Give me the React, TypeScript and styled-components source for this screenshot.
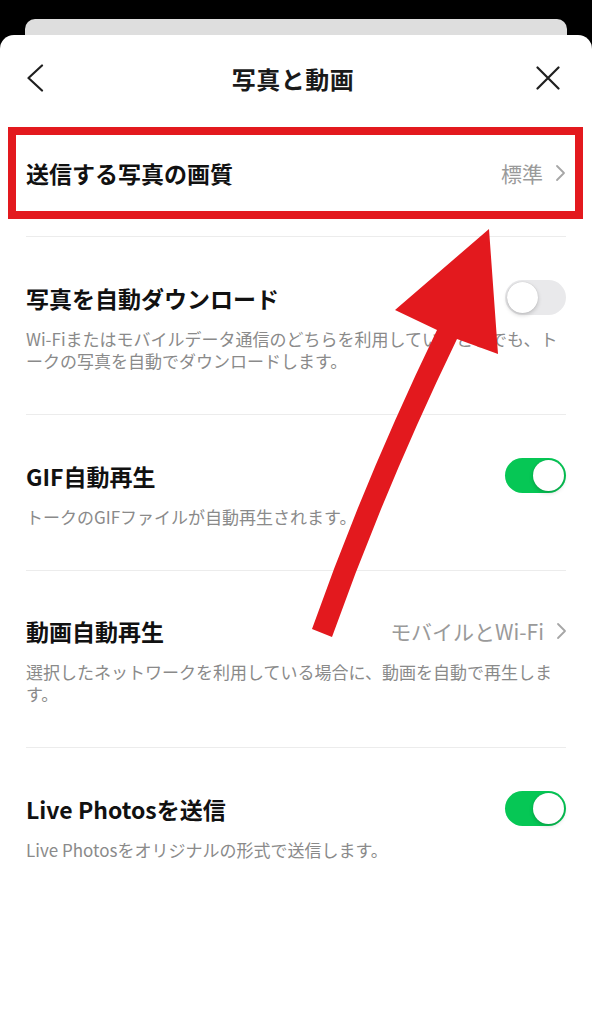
import React from 'react';
import styled, { createGlobalStyle } from 'styled-components';

const GlobalStyle = createGlobalStyle`
  html, body {
    margin: 0;
    padding: 0;
    background: #000;
  }
  body {
    font-family: "Noto Sans CJK JP", "Noto Sans", sans-serif;
    -webkit-font-smoothing: antialiased;
  }
`;

interface Setting {
  title: string;
  description?: string;
  value?: string;
  toggle?: boolean;
}

const settings: Setting[] = [
  {
    title: '写真を自動ダウンロード',
    description:
      'Wi-Fiまたはモバイルデータ通信のどちらを利用しているときでも、トークの写真を自動でダウンロードします。',
    toggle: false,
  },
  {
    title: 'GIF自動再生',
    description: 'トークのGIFファイルが自動再生されます。',
    toggle: true,
  },
  {
    title: '動画自動再生',
    description: '選択したネットワークを利用している場合に、動画を自動で再生します。',
    value: 'モバイルとWi-Fi',
  },
  {
    title: 'Live Photosを送信',
    description: 'Live Photosをオリジナルの形式で送信します。',
    toggle: true,
  },
];

const ChevronRight = () => (
  <svg width="11" height="18" viewBox="0 0 11 18" fill="none">
    <polyline points="2,2 9,9 2,16" stroke="#a6a6a6" strokeWidth="1.8" strokeLinecap="round" strokeLinejoin="round" />
  </svg>
);

const BackIcon = () => (
  <svg width="18" height="28" viewBox="0 0 18 28" fill="none">
    <polyline points="16,1.5 2.5,14 16,26.5" stroke="#1f1f1f" strokeWidth="2.2" strokeLinecap="round" strokeLinejoin="round" />
  </svg>
);

const CloseIcon = () => (
  <svg width="24" height="24" viewBox="0 0 24 24" fill="none">
    <path d="M1.5 1.5 L22.5 22.5 M22.5 1.5 L1.5 22.5" stroke="#1f1f1f" strokeWidth="2.2" strokeLinecap="round" />
  </svg>
);

const App: React.FC = () => {
  return (
    <>
      <GlobalStyle />
      <Screen>
        <PeekCard />
        <Sheet>
          <Header>
            <IconButton aria-label="戻る">
              <BackIcon />
            </IconButton>
            <HeaderTitle>写真と動画</HeaderTitle>
            <IconButton aria-label="閉じる" $align="end">
              <CloseIcon />
            </IconButton>
          </Header>

          <List>
            <Highlighted>
              <RowHead>
                <RowTitle>送信する写真の画質</RowTitle>
                <Value>
                  標準
                  <ChevronRight />
                </Value>
              </RowHead>
            </Highlighted>

            {settings.map((s) => (
              <Row key={s.title}>
                <RowHead>
                  <RowTitle>{s.title}</RowTitle>
                  {s.value && (
                    <Value>
                      {s.value}
                      <ChevronRight />
                    </Value>
                  )}
                  {s.toggle !== undefined && (
                    <Toggle $on={s.toggle}>
                      <Thumb $on={s.toggle} />
                    </Toggle>
                  )}
                </RowHead>
                {s.description && <Description>{s.description}</Description>}
              </Row>
            ))}
          </List>
        </Sheet>

        <Annotation viewBox="0 0 592 1024" width="592" height="1024">
          <path
            d="M489 229 L498 354 L457 339 Q385 488 332 637 L312 629 Q365 479 437 330 L395 310 Z"
            fill="#e3191e"
          />
        </Annotation>
      </Screen>
    </>
  );
};

export default App;

const Screen = styled.div`
  position: relative;
  width: 592px;
  min-height: 1024px;
  padding-top: 19px;
  box-sizing: border-box;
  display: flex;
  flex-direction: column;
  overflow: hidden;
`;

const PeekCard = styled.div`
  height: 16px;
  margin: 0 25px;
  background: #dedede;
  border-radius: 10px 10px 0 0;
`;

const Sheet = styled.div`
  flex: 1;
  background: #fff;
  border-radius: 14px 14px 0 0;
`;

const Header = styled.header`
  height: 86px;
  display: grid;
  grid-template-columns: 1fr auto 1fr;
  align-items: center;
  padding: 0 32px 0 26px;
`;

const IconButton = styled.div<{ $align?: 'start' | 'end' }>`
  display: flex;
  justify-content: ${(p) => (p.$align === 'end' ? 'flex-end' : 'flex-start')};
  align-items: center;
`;

const HeaderTitle = styled.h1`
  margin: 0;
  font-size: 24px;
  font-weight: 700;
  color: #1a1a1a;
  letter-spacing: 0.5px;
`;

const List = styled.div`
  padding: 6px 26px 0;
`;

const Highlighted = styled.div`
  margin: 0 -17px 17px -18px;
  height: 92px;
  box-sizing: border-box;
  border: 8px solid #e3191e;
  padding: 0 10px;
  display: flex;
  align-items: center;
  & > div {
    flex: 1;
  }
`;

const Row = styled.section`
  border-top: 1px solid #ececec;
  padding: 43px 0 42px;
`;

const RowHead = styled.div`
  display: flex;
  align-items: center;
  justify-content: space-between;
  min-height: 34px;
`;

const RowTitle = styled.div`
  font-size: 23px;
  font-weight: 700;
  color: #111;
  line-height: 32px;
`;

const Value = styled.div`
  display: flex;
  align-items: center;
  gap: 12px;
  font-size: 21px;
  color: #9a9a9a;
  svg {
    margin-right: -1px;
  }
`;

const Toggle = styled.div<{ $on: boolean }>`
  width: 61px;
  height: 35px;
  border-radius: 18px;
  background: ${(p) => (p.$on ? '#06c755' : '#e9e9eb')};
  padding: 2px;
  box-sizing: border-box;
  display: flex;
  justify-content: ${(p) => (p.$on ? 'flex-end' : 'flex-start')};
`;

const Thumb = styled.div<{ $on: boolean }>`
  width: 31px;
  height: 31px;
  border-radius: 50%;
  background: #fff;
  box-shadow: 0 2px 4px rgba(0, 0, 0, 0.18), 0 0 1px rgba(0, 0, 0, 0.2);
`;

const Description = styled.p`
  margin: 13px 0 0;
  font-size: 17px;
  line-height: 22px;
  color: #8a8a8a;
`;

const Annotation = styled.svg`
  position: absolute;
  top: 0;
  left: 0;
  pointer-events: none;
`;
